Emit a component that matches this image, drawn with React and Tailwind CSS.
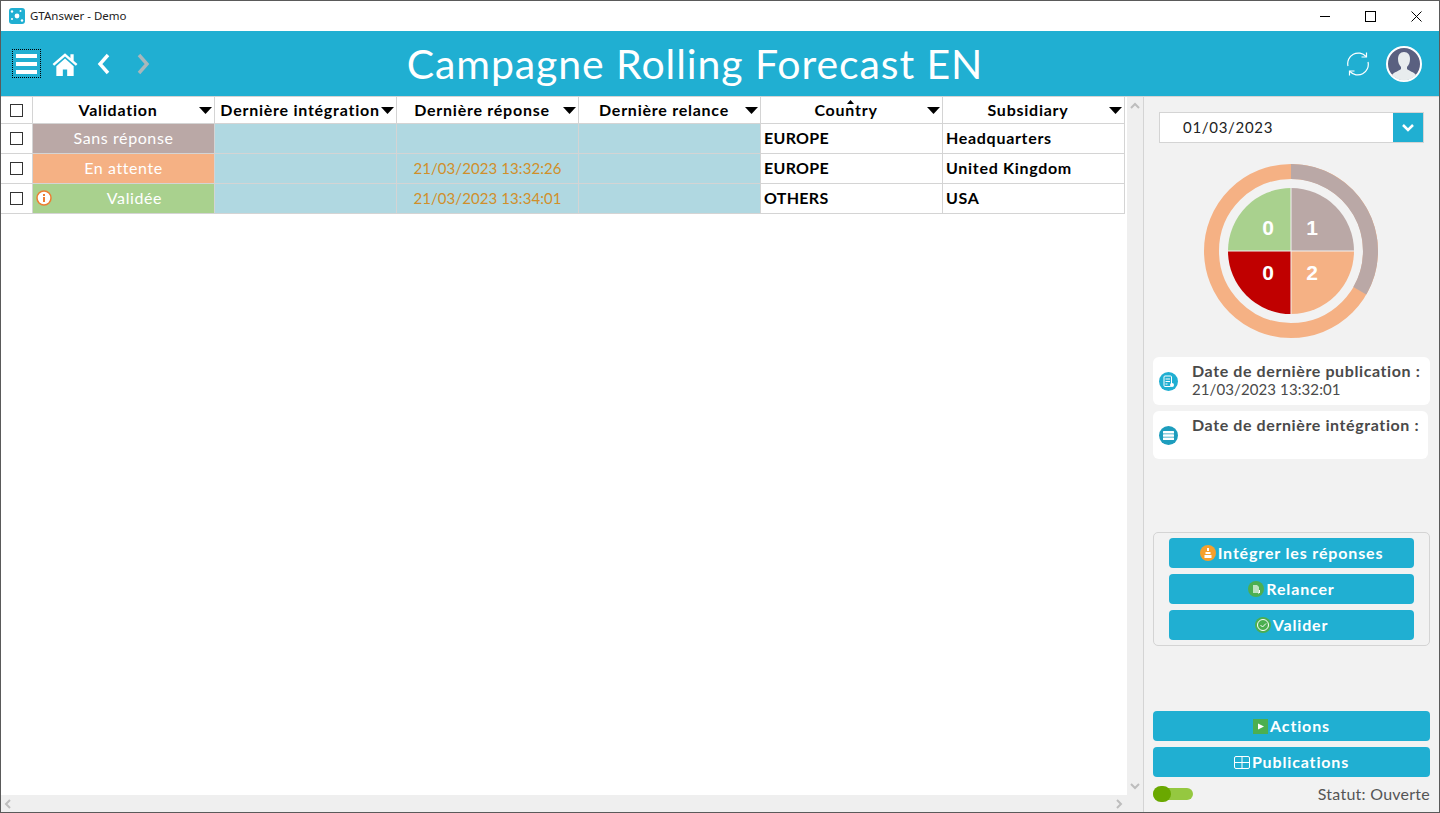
const Check = () => <span className="block w-[13px] h-[13px] border border-[#333] bg-white" />;

const Caret = () => (
    <svg width="13" height="7" viewBox="0 0 13 7" className="absolute right-[2px] top-[10px]">
        <path d="M0 0h13L6.5 7z" fill="#000" />
    </svg>
);

const columns = ['Validation', 'Dernière intégration', 'Dernière réponse', 'Dernière relance', 'Country', 'Subsidiary'];

const rows = [
    { status: 'Sans réponse', color: 'bg-[#baa8a6]', answer: '', country: 'EUROPE', subsidiary: 'Headquarters' },
    { status: 'En attente', color: 'bg-[#f5b184]', answer: '21/03/2023 13:32:26', country: 'EUROPE', subsidiary: 'United Kingdom' },
    { status: 'Validée', color: 'bg-[#a9d18e]', answer: '21/03/2023 13:34:01', country: 'OTHERS', subsidiary: 'USA', info: true },
];

const Table = () => (
    <div className="grid grid-cols-[32px_repeat(6,182px)] grid-rows-[27px_30px_30px_30px] w-[1124px] text-[16px] text-black">
        <div className="flex items-center justify-center border-r border-b border-[#d4d4d4]"><Check /></div>
        {columns.map((col) => (
            <div key={col} className="relative flex items-center justify-center border-r border-b border-[#d4d4d4] font-bold pb-px tracking-[0.75px] pr-[11px]">
                {col}
                {col === 'Country' && (
                    <svg width="7" height="4" viewBox="0 0 7 4" className="absolute left-[86px] top-[3px]"><path d="M0 4h7L3.5 0z" fill="#000" /></svg>
                )}
                <Caret />
            </div>
        ))}
        {rows.map((row) => (
            <div key={row.status} className="contents">
                <div className="flex items-center justify-center border-r border-b border-[#d4d4d4]"><Check /></div>
                <div className={`relative flex items-center justify-center pb-[2px] border-r border-b border-[#d4d4d4] text-white tracking-[0.6px] ${row.color} ${row.info ? 'pl-[22px]' : ''}`}>
                    {row.info && (
                        <svg width="16" height="16" viewBox="0 0 16 16" className="absolute left-[3px] top-[6px]">
                            <circle cx="8" cy="8" r="7" fill="#fff" stroke="#ed7d31" strokeWidth="1.5" />
                            <rect x="7" y="7" width="2" height="5" fill="#ed7d31" />
                            <rect x="7" y="4" width="2" height="2" fill="#ed7d31" />
                        </svg>
                    )}
                    {row.status}
                </div>
                <div className="border-r border-b border-[#d4d4d4] bg-[#b0d8e1]" />
                <div className="flex items-center justify-center border-r border-b border-[#d4d4d4] bg-[#b0d8e1] text-[#d08f2a] text-[15px] tracking-[0.08px]">{row.answer}</div>
                <div className="border-r border-b border-[#d4d4d4] bg-[#b0d8e1]" />
                <div className="flex items-center pl-[3px] pb-[2px] border-r border-b border-[#d4d4d4] font-bold tracking-[0.3px]">{row.country}</div>
                <div className="flex items-center pl-[3px] pb-[2px] border-r border-b border-[#d4d4d4] font-bold tracking-[0.7px]">{row.subsidiary}</div>
            </div>
        ))}
    </div>
);

const Donut = () => (
    <svg width="174" height="174" viewBox="0 0 174 174" className="block">
        <circle cx="87" cy="87" r="79.5" fill="none" stroke="#f5b184" strokeWidth="15" />
        <path d="M87 7.5A79.5 79.5 0 0 1 155.8 126.8" fill="none" stroke="#baa8a6" strokeWidth="15" />
        <path d="M87 24A63 63 0 0 1 150 87H87z" fill="#baa8a6" />
        <path d="M150 87A63 63 0 0 1 87 150V87z" fill="#f5b184" />
        <path d="M87 150A63 63 0 0 1 24 87H87z" fill="#c00000" />
        <path d="M24 87A63 63 0 0 1 87 24V87z" fill="#a9d18e" />
        <path d="M87 24V150M24 87H150" stroke="#f2f2f2" strokeWidth="1" />
        <g fontFamily="'Liberation Sans', sans-serif" fontWeight="700" fontSize="21" fill="#fff" textAnchor="middle">
            <text x="64" y="71">0</text>
            <text x="108" y="71">1</text>
            <text x="64" y="116">0</text>
            <text x="108" y="116">2</text>
        </g>
    </svg>
);

const InfoCard = ({ title, value, width, icon }) => (
    <div className={`flex h-12 rounded-[6px] bg-white text-[#4a4a4a] ${width}`}>
        <div className="flex w-[39px] shrink-0 items-center justify-start pl-[6px]">{icon}</div>
        <div className="pt-[4px] leading-[19px]">
            <div className="font-bold text-[16px] tracking-[0.6px] whitespace-nowrap">{title}</div>
            {value && <div className="text-[15px] tracking-[0.1px]">{value}</div>}
        </div>
    </div>
);

const BlueButton = ({ icon, label }) => (
    <button className="flex h-[30px] w-full items-center justify-center gap-[2px] rounded-[4px] bg-[#20afd2] text-white font-bold text-[16px] tracking-[0.85px]">
        {icon}
        {label}
    </button>
);

const Badge = ({ color, children }) => (
    <svg width="16" height="16" viewBox="0 0 16 16">
        <circle cx="8" cy="8" r="8" fill={color} />
        {children}
    </svg>
);

export default function App() {
    return (
        <div className="flex flex-col w-[1440px] h-[813px] overflow-hidden border border-[#5a5a5a] bg-white font-['Lato','Noto_Sans',sans-serif]">
            {/* Title bar */}
            <div className="flex h-[30px] shrink-0 items-center bg-white pl-[8px] text-[11.5px] text-[#222] font-['Noto_Sans',sans-serif]">
                <svg width="16" height="16" viewBox="0 0 16 16" className="mr-[5px]">
                    <rect width="16" height="16" rx="3" fill="#20afd2" />
                    <circle cx="8" cy="8" r="2.4" fill="#fff" />
                    <circle cx="3" cy="3.5" r="1.2" fill="#fff" />
                    <circle cx="11.5" cy="3" r="1" fill="#fff" />
                    <circle cx="13" cy="12.5" r="1.2" fill="#fff" />
                    <circle cx="3" cy="11" r="1" fill="#fff" />
                </svg>
                GTAnswer - Demo
                <div className="ml-auto flex items-center pr-[17px] gap-[35px]">
                    <svg width="10" height="11" viewBox="0 0 10 11"><path d="M0 5.5h10" stroke="#000" /></svg>
                    <svg width="11" height="11" viewBox="0 0 11 11"><rect x="0.5" y="0.5" width="10" height="10" fill="none" stroke="#000" /></svg>
                    <svg width="11" height="11" viewBox="0 0 11 11"><path d="M0.5 0.5l10 10M10.5 0.5l-10 10" stroke="#000" /></svg>
                </div>
            </div>

            {/* Header */}
            <div className="flex h-[65px] shrink-0 items-center bg-[#20afd2] text-white">
                <div className="flex w-[160px] items-center pl-[11px]">
                    <button className="flex h-[29px] w-[29px] flex-col items-center justify-center gap-[4px] border border-dotted border-black">
                        <span className="block h-[4px] w-[21px] bg-white" />
                        <span className="block h-[4px] w-[21px] bg-white" />
                        <span className="block h-[4px] w-[21px] bg-white" />
                    </button>
                    <svg width="26" height="24" viewBox="0 0 24 22" className="ml-[11px]">
                        <path d="M12 1L0.5 11l1.5 1.6L12 4l10 8.6 1.5-1.6-3.5-3V2h-3v3.4z" fill="#fff" />
                        <path d="M12 6L4 13v9h6v-6h4v6h6v-9z" fill="#fff" />
                    </svg>
                    <svg width="14" height="22" viewBox="0 0 14 22" className="ml-[19px]"><path d="M11 2L3 11l8 9" fill="none" stroke="#fff" strokeWidth="3.4" /></svg>
                    <svg width="14" height="22" viewBox="0 0 14 22" className="ml-[25px]"><path d="M3 2l8 9-8 9" fill="none" stroke="#a9b7bb" strokeWidth="3.4" /></svg>
                </div>
                <div className="flex-1 text-center text-[41px] tracking-[0.92px] whitespace-nowrap">Campagne Rolling Forecast EN</div>
                <div className="flex w-[210px] items-center justify-end gap-[16px] pr-[17px]">
                    <svg width="24" height="24" viewBox="0 0 24 24" fill="none" stroke="#fff" strokeWidth="1.2">
                        <path d="M2 14A10.5 10.5 0 0 1 20 4.5" />
                        <path d="M22 10A10.5 10.5 0 0 1 4 19.5" />
                        <path d="M20.5 0.5v4.5h-5M3.500 23.500v-4.500h5" />
                    </svg>
                    <svg width="36" height="36" viewBox="0 0 36 36">
                        <circle cx="18" cy="18" r="17" fill="#5a6080" stroke="#fff" strokeWidth="2" />
                        <path d="M18 6c4 0 6 3 6 7 0 3-1 6-3 8v2c2 2 7 3 9 6a16 16 0 0 1-24 0c2-3 7-4 9-6v-2c-2-2-3-5-3-8 0-4 2-7 6-7z" fill="#e8ecee" />
                    </svg>
                </div>
            </div>

            <div className="flex min-h-0 flex-1 border-t border-[#d4d4d4]">
                {/* Table + scrollbars */}
                <div className="flex min-w-0 w-[1143px] shrink-0 border-r border-[#d4d4d4] bg-[#efefef]">
                    <div className="flex flex-col w-[1126px]">
                        <div className="flex-1 bg-white overflow-hidden"><Table /></div>
                        <div className="flex h-[17px] shrink-0 items-center justify-between pl-[3px] pr-[4px]">
                            <svg width="8" height="10" viewBox="0 0 8 10"><path d="M6 1L2 5l4 4" fill="none" stroke="#bdbdbd" strokeWidth="2" /></svg>
                            <svg width="8" height="10" viewBox="0 0 8 10"><path d="M2 1l4 4-4 4" fill="none" stroke="#bdbdbd" strokeWidth="2" /></svg>
                        </div>
                    </div>
                    <div className="flex w-[16px] flex-col items-center justify-between pt-[5px] pb-[22px]">
                        <svg width="10" height="8" viewBox="0 0 10 8"><path d="M1 6l4-4 4 4" fill="none" stroke="#bdbdbd" strokeWidth="2" /></svg>
                        <svg width="10" height="8" viewBox="0 0 10 8"><path d="M1 2l4 4 4-4" fill="none" stroke="#bdbdbd" strokeWidth="2" /></svg>
                    </div>
                </div>

                {/* Side panel */}
                <div className="flex flex-1 flex-col bg-[#f2f2f2] pl-[9px] pr-[9px] pt-[15px] pb-[9px]">
                    <div className="ml-[6px] mr-[6px] flex h-[31px] border border-[#d4d4d4] bg-white">
                        <div className="flex-1 pl-[23px] text-[15px] leading-[29px] tracking-[0.7px] text-[#222]">01/03/2023</div>
                        <div className="flex w-[30px] items-center justify-center bg-[#20afd2]">
                            <svg width="14" height="10" viewBox="0 0 14 10"><path d="M2 2l5 5 5-5" fill="none" stroke="#fff" strokeWidth="2.5" /></svg>
                        </div>
                    </div>
                    <div className="mt-[21px] flex justify-center pr-[1px]"><Donut /></div>
                    <div className="mt-[19px] flex flex-col gap-[6px]">
                        <InfoCard
                            title="Date de dernière publication :"
                            value="21/03/2023 13:32:01"
                            width="w-[277px]"
                            icon={
                                <svg width="19" height="19" viewBox="0 0 19 19">
                                    <circle cx="9.500" cy="9.500" r="9.500" fill="#20afd2" />
                                    <rect x="5" y="4" width="7.500" height="10.500" rx="1" fill="none" stroke="#fff" />
                                    <path d="M6.500 7h4.500M6.500 9.500h4.500M6.500 12h2" stroke="#fff" />
                                    <circle cx="13" cy="13" r="2" fill="#fff" />
                                </svg>
                            }
                        />
                        <InfoCard
                            title="Date de dernière intégration :"
                            width="w-[275px]"
                            icon={
                                <svg width="19" height="19" viewBox="0 0 19 19">
                                    <circle cx="9.500" cy="9.500" r="9.500" fill="#1d9dbd" />
                                    <rect x="4" y="5" width="11" height="2.500" rx="0.500" fill="#fff" />
                                    <rect x="4" y="8.300" width="11" height="2.500" rx="0.500" fill="#fff" />
                                    <rect x="4" y="11.600" width="11" height="2.500" rx="0.500" fill="#fff" />
                                </svg>
                            }
                        />
                    </div>
                    <div className="mt-[73px] flex flex-col gap-[6px] rounded-[5px] border border-[#d4d4d4] px-[15px] py-[5px]">
                        <BlueButton
                            label="Intégrer les réponses"
                            icon={
                                <Badge color="#f5a02c">
                                    <path d="M7 3h2v3H7zM5.500 7h5v2h-5zM4.500 10h7v3h-7z" fill="#fff" />
                                </Badge>
                            }
                        />
                        <BlueButton
                            label="Relancer"
                            icon={
                                <Badge color="#4caf50">
                                    <path d="M5 4h4l2 2v6H5z" fill="#bfe3c1" />
                                    <path d="M11.500 9v3M10 12h1" stroke="#fff" />
                                </Badge>
                            }
                        />
                        <BlueButton
                            label="Valider"
                            icon={
                                <Badge color="#4caf50">
                                    <circle cx="8" cy="8" r="5.500" fill="none" stroke="#fff" />
                                    <path d="M5.500 8l2 2 3.500-3.500" fill="none" stroke="#fff" />
                                </Badge>
                            }
                        />
                    </div>
                    <div className="mt-auto flex flex-col gap-[6px]">
                        <BlueButton
                            label="Actions"
                            icon={
                                <svg width="15" height="15" viewBox="0 0 15 15">
                                    <rect width="15" height="15" fill="#4caf50" />
                                    <path d="M5 4.500l6 3-6 3z" fill="#fff" />
                                </svg>
                            }
                        />
                        <BlueButton
                            label="Publications"
                            icon={
                                <svg width="16" height="13" viewBox="0 0 16 13" fill="none" stroke="#fff">
                                    <rect x="0.500" y="0.500" width="15" height="12" rx="1.500" />
                                    <path d="M8 0.500v12M0.500 6.500h15" />
                                </svg>
                            }
                        />
                        <div className="flex h-[18px] items-center justify-between mt-[2px]">
                            <div className="relative h-[12px] w-[40px] rounded-full bg-[#95c840]">
                                <span className="absolute -top-[2px] left-0 block h-[16px] w-[18px] rounded-full bg-[#6aa800]" />
                            </div>
                            <span className="text-[16px] text-[#555] tracking-[0.25px]">Statut: Ouverte</span>
                        </div>
                    </div>
                </div>
            </div>
        </div>
    );
}
